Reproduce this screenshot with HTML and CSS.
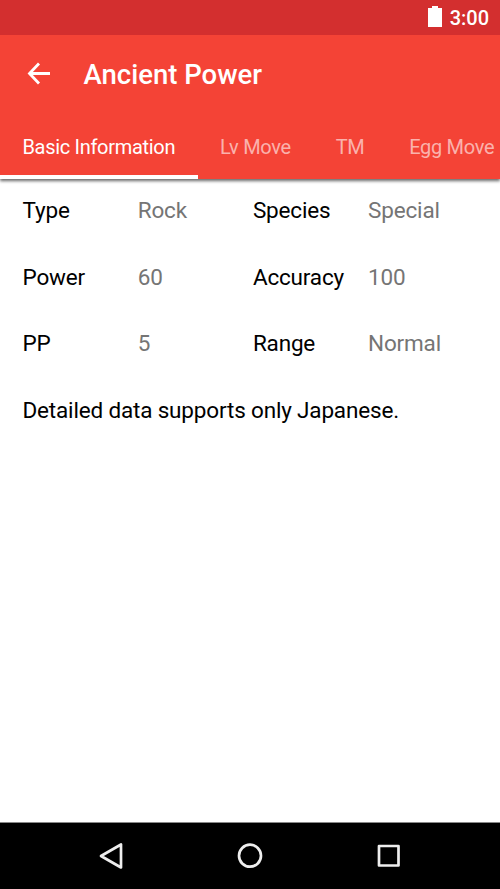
FILE: index.html
```html
<!DOCTYPE html>
<html lang="en">
<head>
<meta charset="utf-8">
<title>Ancient Power</title>
<link rel="stylesheet" href="styles.css">
</head>
<body>
<div class="status">
<svg class="battery" width="14" height="22" viewBox="0 0 14 22"><path fill="#fff" d="M4 0h6v2h4v19H0V2h4z"/></svg>
<span class="clock">3:00</span>
</div>
<header class="appbar">
<div class="toolbar">
<svg class="back" width="24" height="24" viewBox="0 0 24 24"><path d="M23 11.500H3M12 1.500L2.500 11.500l9.500 10" fill="none" stroke="#fff" stroke-width="2.800"/></svg>
<h1 class="title">Ancient Power</h1>
</div>
<nav class="tabs">
<span class="tab active">Basic Information</span><span class="tab">Lv Move</span><span class="tab">TM</span><span class="tab">Egg Move</span>
</nav>
</header>
<main class="content">
<dl class="facts">
<dt>Type</dt><dd>Rock</dd><dt>Species</dt><dd>Special</dd>
<dt>Power</dt><dd>60</dd><dt>Accuracy</dt><dd>100</dd>
<dt>PP</dt><dd>5</dd><dt>Range</dt><dd>Normal</dd>
</dl>
<p class="note">Detailed data supports only Japanese.</p>
</main>
<footer class="navbar">
<svg width="28" height="28" viewBox="0 0 28 28"><path d="M24 2.500v23L4 14z"/></svg>
<svg width="28" height="28" viewBox="0 0 28 28"><circle cx="14" cy="13.700" r="11"/></svg>
<svg width="28" height="28" viewBox="0 0 28 28"><rect x="4" y="4" width="19.500" height="19.500"/></svg>
</footer>
</body>
</html>
```
FILE: styles.css
```css
* { box-sizing: border-box; }
body { margin: 0; height: 889px; display: flex; flex-direction: column; overflow: hidden; background: #fff; font-family: Roboto, sans-serif; }
.status { height: 35px; background: #d32f2f; display: flex; align-items: center; justify-content: flex-end; gap: 8px; padding-right: 11px; color: #fff; position: relative; z-index: 1; }
.battery { margin-top: -1px; }
.clock { font-size: 20px; font-weight: 500; line-height: 36px; }
.appbar { height: 144px; background: #f44336; color: #fff; box-shadow: 0 2px 3px rgba(0,0,0,.6); }
.toolbar { height: 78px; display: flex; align-items: center; padding-left: 27px; gap: 32.500px; }
.title { margin: 0; font-size: 27.500px; font-weight: 500; }
.tabs { height: 66px; display: flex; overflow: hidden; font-size: 20px; line-height: 68px; letter-spacing: -0.3px; color: rgba(255,255,255,.6); }
.tab { height: 66px; padding: 0 22.400px; white-space: nowrap; flex: none; }
.active { color: #fff; border-bottom: 4px solid #fff; }
.content { flex: 1; font-size: 22.500px; letter-spacing: -0.17px; }
.facts { margin: 0; padding-left: 22.500px; display: grid; grid-template-columns: repeat(4, 115.200px); grid-auto-rows: 66.700px; line-height: 62px; color: #000; }
dd { margin: 0; color: #757575; }
.note { margin: 0; padding-left: 22.500px; line-height: 62px; color: #000; }
.navbar { height: 67px; background: #000; border-top: 1px solid #888; display: flex; align-items: center; justify-content: center; gap: 111px; }
.navbar svg { fill: none; stroke: #eee; stroke-width: 2.700; stroke-linejoin: round; }
```
